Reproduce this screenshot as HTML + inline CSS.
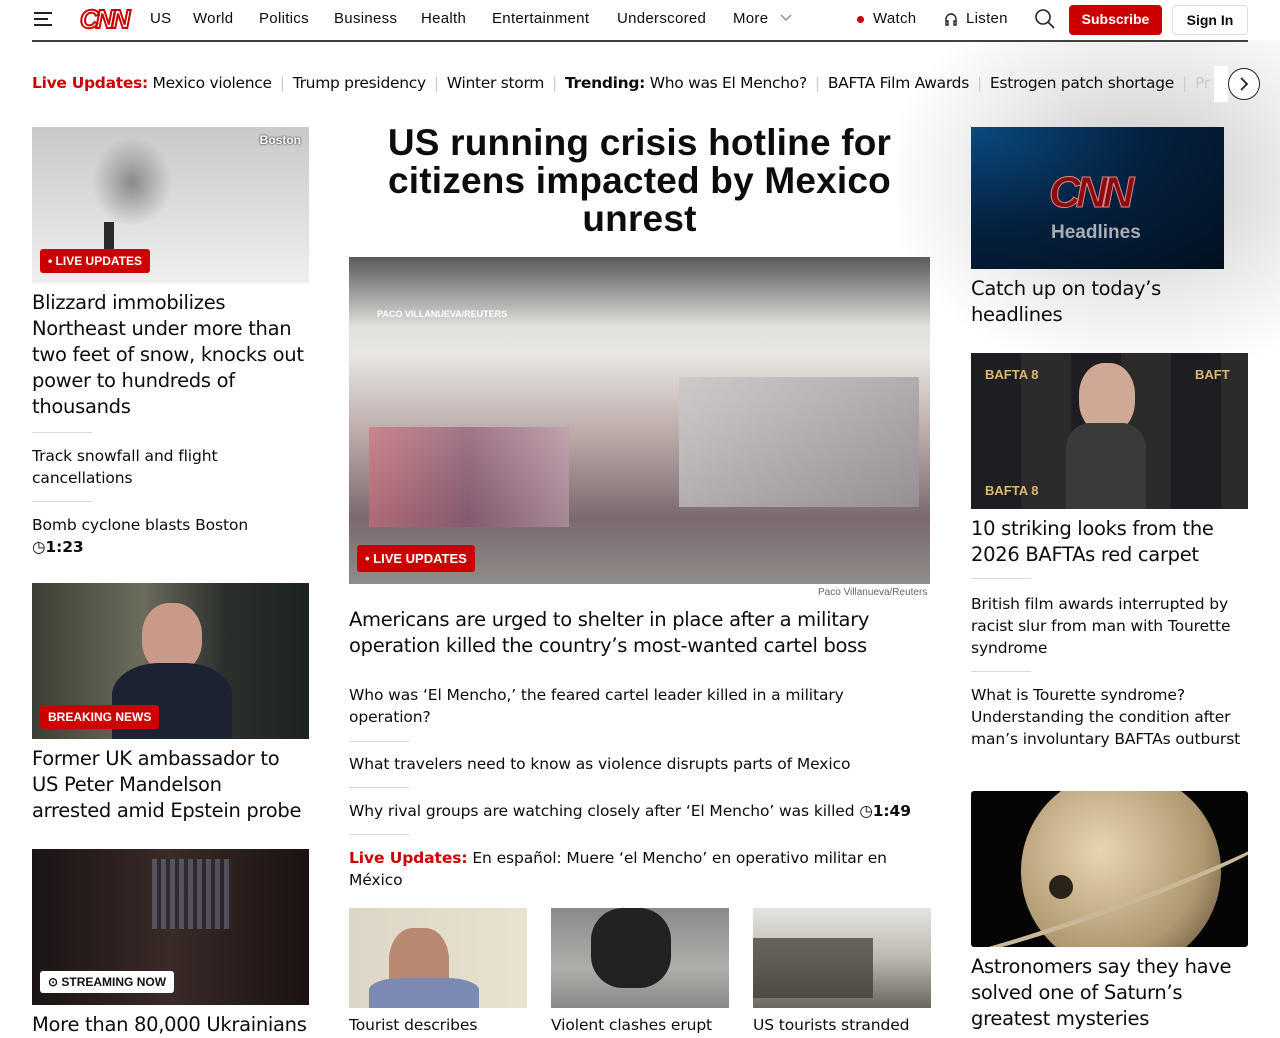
<!DOCTYPE html>
<html><head><meta charset="utf-8"><style>
*{margin:0;padding:0;box-sizing:border-box}
body{width:1280px;height:1024px;overflow:hidden;background:#fff;font-family:"Liberation Sans",Arial,sans-serif;color:#0c0c0c;position:relative}
.abs{position:absolute}
.shade{position:absolute;left:900px;top:40px;width:560px;height:360px;background:radial-gradient(ellipse 260px 200px at 240px 140px,rgba(0,0,0,.22),rgba(0,0,0,.08) 60%,rgba(0,0,0,0) 100%);pointer-events:none}
.nav a{position:absolute;top:10px;font-size:15px;color:#0c0c0c;text-decoration:none;letter-spacing:.3px}
.topline{position:absolute;left:32px;top:40px;width:1216px;height:2px;background:#404040}
.trend{position:absolute;top:74px;left:32px;font-size:15.5px;white-space:nowrap;letter-spacing:-.3px;font-family:"DejaVu Sans",sans-serif}
.trend .sep{color:#ccc;margin:0 8px}
.red{color:#cc0000;font-weight:bold}
.img{position:absolute;overflow:hidden}
.h3{position:absolute;font-family:"DejaVu Sans",sans-serif;font-size:19.5px;line-height:26px;font-weight:500;letter-spacing:-.3px}
.lk{position:absolute;font-family:"DejaVu Sans",sans-serif;font-size:15.5px;line-height:22px;letter-spacing:-.1px}
.rule{position:absolute;height:1px;width:60px;background:#d8d8d8}
.badge{position:absolute;background:#cc0000;color:#fff;font-size:12px;font-weight:bold;padding:5px 8px;border-radius:3px}
</style></head><body>
<div class="shade"></div>
<div class="abs" style="left:34px;top:12px;width:18px;height:2px;background:#222"></div>
<div class="abs" style="left:34px;top:18px;width:14px;height:2px;background:#222"></div>
<div class="abs" style="left:34px;top:24px;width:18px;height:2px;background:#222"></div>
<div class="abs" style="left:80px;top:6px;font:italic bold 26px 'Liberation Sans',sans-serif;color:#fff;-webkit-text-stroke:2px #cc0000;letter-spacing:-3px;line-height:26px">CNN</div>
<div class="nav">
<a style="left:150px">US</a><a style="left:193px">World</a><a style="left:259px">Politics</a><a style="left:334px">Business</a><a style="left:421px">Health</a><a style="left:492px">Entertainment</a><a style="left:617px">Underscored</a><a style="left:733px">More</a>
<a style="left:873px">Watch</a><a style="left:966px">Listen</a>
</div>
<svg class="abs" style="left:780px;top:14px" width="12" height="8"><path d="M1 1l5 5 5-5" stroke="#888" fill="none" stroke-width="1.3"/></svg>
<div class="abs" style="left:857px;top:16px;width:7px;height:7px;border-radius:50%;background:#cc0000"></div>
<svg class="abs" style="left:943px;top:11px" width="16" height="16"><path d="M3 12V8a5 5 0 0110 0v4M3 10h2v4H3zM11 10h2v4h-2z" stroke="#222" fill="none" stroke-width="1.4"/></svg>
<svg class="abs" style="left:1034px;top:8px" width="22" height="22"><circle cx="9" cy="9" r="7" stroke="#222" fill="none" stroke-width="1.6"/><path d="M14 14l6 6" stroke="#222" stroke-width="1.6"/></svg>
<div class="abs" style="left:1069px;top:5px;width:93px;height:30px;background:#cc0000;border-radius:4px;color:#fff;font-weight:bold;font-size:14px;text-align:center;line-height:28px">Subscribe</div>
<div class="abs" style="left:1172px;top:5px;width:76px;height:30px;border:1px solid #e0e0e0;border-radius:4px;background:#fff;font-weight:bold;font-size:14px;text-align:center;line-height:28px">Sign In</div>
<div class="topline"></div>
<div class="trend"><span class="red">Live Updates:</span> Mexico violence<span class="sep">|</span>Trump presidency<span class="sep">|</span>Winter storm<span class="sep">|</span><b>Trending:</b> Who was El Mencho?<span class="sep">|</span>BAFTA Film Awards<span class="sep">|</span>Estrogen patch shortage<span class="sep">|</span><span style="color:#ccc">Pr</span></div>
<div class="abs" style="left:1214px;top:66px;width:14px;height:36px;background:#fff"></div>
<div class="abs" style="left:1228px;top:68px;width:32px;height:32px;border:1.5px solid #222;border-radius:50%;background:#fff"></div>
<svg class="abs" style="left:1238px;top:76px" width="12" height="16"><path d="M3 2l6 6-6 6" stroke="#222" stroke-width="1.8" fill="none"/></svg>

<div class="img" style="left:32px;top:127px;width:277px;height:156px;background:linear-gradient(180deg,#c9c9cb,#dcdcdd 50%,#efefef)">
<div class="abs" style="left:60px;top:10px;width:80px;height:90px;border-radius:50%;background:radial-gradient(#8a8a8c,rgba(150,150,150,0) 70%)"></div>
<div class="abs" style="left:72px;top:95px;width:10px;height:30px;background:#2a2a2a"></div>
<div class="abs" style="right:8px;top:6px;color:#fff;font-size:12px;font-weight:bold;text-shadow:0 0 2px #000">Boston</div>
<div class="badge" style="left:8px;top:122px">• LIVE UPDATES</div></div>
<div class="h3" style="left:32px;top:290px;width:280px">Blizzard immobilizes Northeast under more than two feet of snow, knocks out power to hundreds of thousands</div>
<div class="rule" style="left:32px;top:432px"></div>
<div class="lk" style="left:32px;top:445px;width:260px">Track snowfall and flight cancellations</div>
<div class="rule" style="left:32px;top:501px"></div>
<div class="lk" style="left:32px;top:514px">Bomb cyclone blasts Boston<br><span style="font-weight:bold">◷1:23</span></div>
<div class="img" style="left:32px;top:583px;width:277px;height:156px;background:linear-gradient(90deg,#3c4034,#6b6c5c 40%,#2b2f2c 70%,#1d2224)">
<div class="abs" style="left:110px;top:20px;width:60px;height:70px;border-radius:45%;background:#c99a88"></div>
<div class="abs" style="left:80px;top:80px;width:120px;height:80px;border-radius:40% 40% 0 0;background:#1d2233"></div>
<div class="badge" style="left:8px;top:122px">BREAKING NEWS</div></div>
<div class="h3" style="left:32px;top:746px;width:280px">Former UK ambassador to<br>US Peter Mandelson<br>arrested amid Epstein probe</div>
<div class="img" style="left:32px;top:849px;width:277px;height:156px;background:linear-gradient(90deg,#1a1414,#3a2a28 50%,#1a1212)">
<div class="abs" style="left:120px;top:10px;width:80px;height:70px;background:repeating-linear-gradient(90deg,#6d6f80 0 5px,#2a2a3a 5px 9px);opacity:.6"></div>
<div class="abs" style="left:8px;top:122px;background:#fff;color:#111;font-size:12px;font-weight:bold;padding:4px 8px;border-radius:3px">⊙ STREAMING NOW</div></div>
<div class="h3" style="left:32px;top:1012px;width:280px">More than 80,000 Ukrainians</div>

<div class="abs" style="left:349px;top:124px;width:581px;text-align:center;font-size:37px;line-height:38px;font-weight:bold;letter-spacing:.2px">US running crisis hotline for citizens impacted by Mexico unrest</div>
<div class="img" style="left:349px;top:257px;width:581px;height:327px;background:linear-gradient(180deg,#d8d6d4 0%,#e8e6e2 30%,#b8a8a6 55%,#7a6a70 80%,#8f8c88 100%)">
<div class="abs" style="left:0;top:0;width:581px;height:70px;background:linear-gradient(180deg,#5a5a5c,rgba(200,200,200,0))"></div>
<div class="abs" style="left:330px;top:120px;width:240px;height:130px;background:linear-gradient(90deg,#c8c6c8,#9d9aa0);opacity:.7"></div>
<div class="abs" style="left:20px;top:170px;width:200px;height:100px;background:linear-gradient(90deg,#d36a78,#8b5070,#c49bb0);opacity:.6"></div>
<div class="abs" style="left:28px;top:52px;color:#fff;font-size:9px;font-weight:bold">PACO VILLANUEVA/REUTERS</div>
<div class="badge" style="left:8px;top:288px;font-size:13px;padding:6px 8px">• LIVE UPDATES</div></div>
<div class="abs" style="left:818px;top:587px;font-size:10px;color:#666">Paco Villanueva/Reuters</div>
<div class="h3" style="left:349px;top:607px;width:570px">Americans are urged to shelter in place after a military operation killed the country’s most-wanted cartel boss</div>
<div class="lk" style="left:349px;top:684px;width:540px">Who was ‘El Mencho,’ the feared cartel leader killed in a military operation?</div>
<div class="rule" style="left:349px;top:741px"></div>
<div class="lk" style="left:349px;top:753px">What travelers need to know as violence disrupts parts of Mexico</div>
<div class="rule" style="left:349px;top:787px"></div>
<div class="lk" style="left:349px;top:800px;white-space:nowrap">Why rival groups are watching closely after ‘El Mencho’ was killed <b>◷1:49</b></div>
<div class="rule" style="left:349px;top:834px"></div>
<div class="lk" style="left:349px;top:847px;width:560px"><span class="red">Live Updates:</span> En español: Muere ‘el Mencho’ en operativo militar en México</div>
<div class="img" style="left:349px;top:908px;width:178px;height:100px;background:linear-gradient(90deg,#dcd6c6,#e8e2d0)"><div class="abs" style="left:40px;top:20px;width:60px;height:80px;border-radius:40%;background:#b98870"></div><div class="abs" style="left:20px;top:70px;width:110px;height:40px;background:#7a8ab0;border-radius:30% 30% 0 0"></div></div>
<div class="img" style="left:551px;top:908px;width:178px;height:100px;background:linear-gradient(180deg,#8a8a8c,#b0aeaa 60%,#888)"><div class="abs" style="left:40px;top:0;width:80px;height:80px;border-radius:40%;background:#222"></div></div>
<div class="img" style="left:753px;top:908px;width:178px;height:100px;background:linear-gradient(180deg,#e4e4e2,#bcb8b0 50%,#6a6660)"><div class="abs" style="left:0;top:30px;width:120px;height:60px;background:#3a3630;opacity:.7"></div></div>
<div class="lk" style="left:349px;top:1014px">Tourist describes</div>
<div class="lk" style="left:551px;top:1014px">Violent clashes erupt</div>
<div class="lk" style="left:753px;top:1014px">US tourists stranded</div>

<div class="img" style="left:971px;top:127px;width:253px;height:142px;background:radial-gradient(ellipse at 0% 0%,#0a4a80,#04213f 50%,#02101f)">
<div class="abs" style="left:78px;top:44px;font:italic bold 44px 'Liberation Sans',sans-serif;color:#8a0c10;-webkit-text-stroke:1px #d88;letter-spacing:-5px;line-height:44px">CNN</div>
<div class="abs" style="left:80px;top:95px;color:#a8aeb6;font-weight:bold;font-size:19px">Headlines</div></div>
<div class="h3" style="left:971px;top:276px;width:230px">Catch up on today’s headlines</div>
<div class="img" style="left:971px;top:353px;width:277px;height:156px;background:#2a2a2e">
<div class="abs" style="left:0;top:0;width:277px;height:156px;background:repeating-linear-gradient(90deg,#1e1e22 0 50px,#2c2a2a 50px 100px)"></div>
<div class="abs" style="left:14px;top:14px;color:#d9b872;font-size:13px;font-weight:bold">BAFTA 8</div>
<div class="abs" style="left:224px;top:14px;color:#d9b872;font-size:13px;font-weight:bold">BAFT</div>
<div class="abs" style="left:14px;top:130px;color:#d9b872;font-size:13px;font-weight:bold">BAFTA 8</div>
<div class="abs" style="left:108px;top:10px;width:56px;height:70px;border-radius:45%;background:#d0a896"></div>
<div class="abs" style="left:95px;top:70px;width:80px;height:86px;background:#3a3a3a;border-radius:30% 30% 0 0"></div></div>
<div class="h3" style="left:971px;top:516px;width:277px">10 striking looks from the 2026 BAFTAs red carpet</div>
<div class="rule" style="left:971px;top:578px"></div>
<div class="lk" style="left:971px;top:593px;width:277px">British film awards interrupted by racist slur from man with Tourette syndrome</div>
<div class="rule" style="left:971px;top:671px"></div>
<div class="lk" style="left:971px;top:684px;width:280px">What is Tourette syndrome? Understanding the condition after man’s involuntary BAFTAs outburst</div>
<div class="img" style="left:971px;top:791px;width:277px;height:156px;background:#050505;border-radius:3px">
<div class="abs" style="left:50px;top:-20px;width:200px;height:200px;border-radius:50%;background:radial-gradient(circle at 40% 40%,#e6d6b0,#b09870 60%,#4a3a28)"></div>
<div class="abs" style="left:-30px;top:90px;width:340px;height:30px;border-radius:50%;border:5px solid #c8b898;transform:rotate(-20deg);border-top-color:transparent"></div>
<div class="abs" style="left:78px;top:84px;width:24px;height:24px;border-radius:50%;background:#2a2418"></div></div>
<div class="h3" style="left:971px;top:954px;width:277px">Astronomers say they have solved one of Saturn’s greatest mysteries</div>
</body></html>
